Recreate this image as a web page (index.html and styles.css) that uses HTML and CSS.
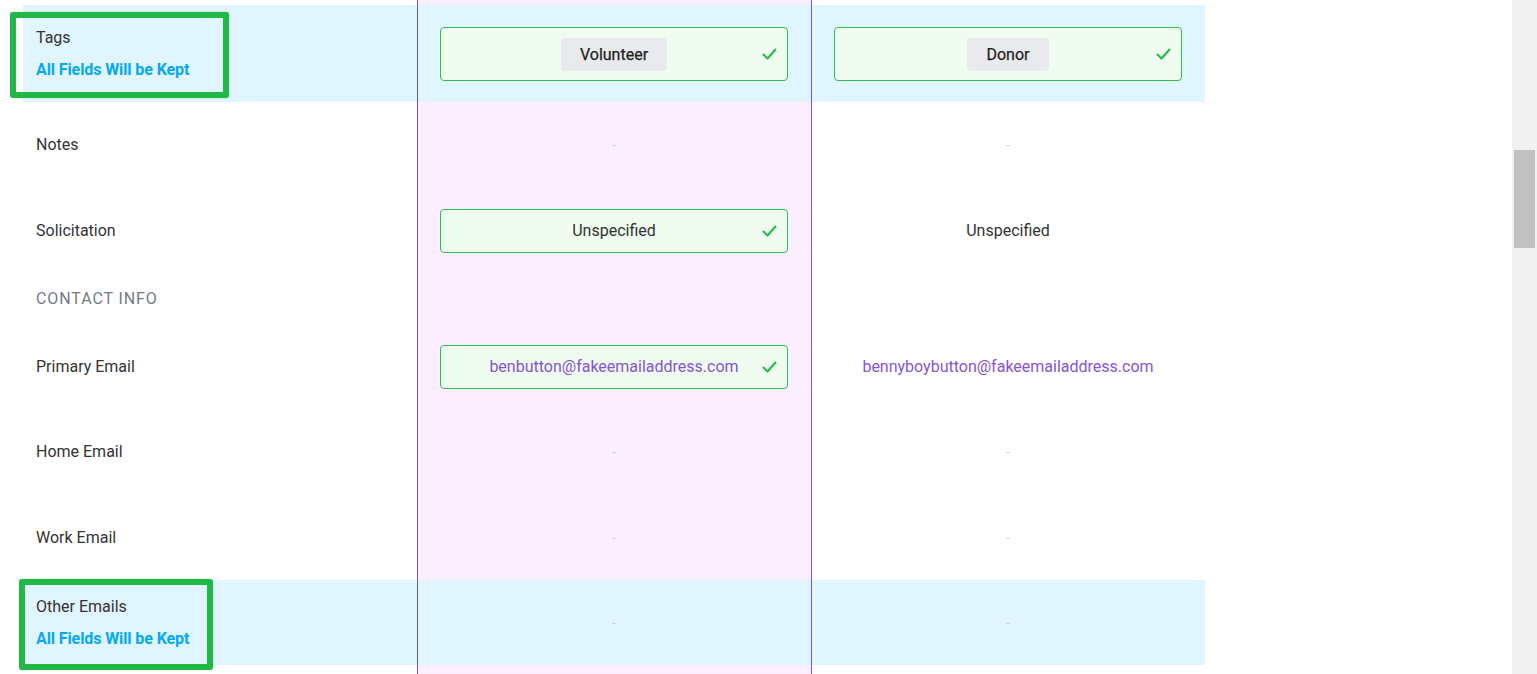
FILE: index.html
```html
<!DOCTYPE html>
<html>
<head>
<meta charset="utf-8">
<link rel="stylesheet" href="styles.css">
</head>
<body>
<div class="page">
  <div class="main">
    <div class="table">
      <div class="row spacer"><div class="cell"></div><div class="cell sel"></div><div class="cell"></div></div>

      <div class="row hl tall">
        <div class="cell label">
          <div class="name">Tags</div>
          <div class="kept">All Fields Will be Kept</div>
          <div class="mark mark-tags"></div>
        </div>
        <div class="cell sel val">
          <div class="field f54"><span></span><span class="chip">Volunteer</span><svg class="check" viewBox="0 0 15 12"><polyline points="1.5,6.5 5.5,10.5 13.5,1.5"/></svg></div>
        </div>
        <div class="cell val">
          <div class="field f54"><span></span><span class="chip">Donor</span><svg class="check" viewBox="0 0 15 12"><polyline points="1.5,6.5 5.5,10.5 13.5,1.5"/></svg></div>
        </div>
      </div>

      <div class="row">
        <div class="cell label"><div class="name">Notes</div></div>
        <div class="cell sel val"><span class="dash">-</span></div>
        <div class="cell val"><span class="dash">-</span></div>
      </div>

      <div class="row r85">
        <div class="cell label"><div class="name">Solicitation</div></div>
        <div class="cell sel val">
          <div class="field f44"><span></span><span class="txt">Unspecified</span><svg class="check" viewBox="0 0 15 12"><polyline points="1.5,6.5 5.5,10.5 13.5,1.5"/></svg></div>
        </div>
        <div class="cell val"><span class="txt">Unspecified</span></div>
      </div>

      <div class="row head">
        <div class="cell label"><div class="section">CONTACT INFO</div></div>
        <div class="cell sel"></div>
        <div class="cell"></div>
      </div>

      <div class="row r85">
        <div class="cell label"><div class="name">Primary Email</div></div>
        <div class="cell sel val">
          <div class="field f44"><span></span><span class="email">benbutton@fakeemailaddress.com</span><svg class="check" viewBox="0 0 15 12"><polyline points="1.5,6.5 5.5,10.5 13.5,1.5"/></svg></div>
        </div>
        <div class="cell val"><span class="email">bennyboybutton@fakeemailaddress.com</span></div>
      </div>

      <div class="row">
        <div class="cell label"><div class="name">Home Email</div></div>
        <div class="cell sel val"><span class="dash">-</span></div>
        <div class="cell val"><span class="dash">-</span></div>
      </div>

      <div class="row r85">
        <div class="cell label"><div class="name">Work Email</div></div>
        <div class="cell sel val"><span class="dash">-</span></div>
        <div class="cell val"><span class="dash">-</span></div>
      </div>

      <div class="row hl r85">
        <div class="cell label">
          <div class="name">Other Emails</div>
          <div class="kept">All Fields Will be Kept</div>
          <div class="mark mark-other"></div>
        </div>
        <div class="cell sel val"><span class="dash">-</span></div>
        <div class="cell val"><span class="dash">-</span></div>
      </div>

      <div class="row">
        <div class="cell label"></div>
        <div class="cell sel"></div>
        <div class="cell"></div>
      </div>
    </div>
  </div>
  <div class="scrollbar"><div class="thumb"></div></div>
</div>
</body>
</html>
```

FILE: styles.css
```css
html, body {
  margin: 0;
  padding: 0;
  height: 674px;
  overflow: hidden;
  background: #ffffff;
}

body {
  font-family: Roboto, "Liberation Sans", Arial, sans-serif;
  font-size: 16px;
  color: #333333;
}

.page {
  display: flex;
  height: 674px;
}

.main {
  flex: 1;
  overflow: hidden;
}

.scrollbar {
  width: 25px;
  background: #f1f1f1;
  display: flex;
  flex-direction: column;
  align-items: center;
}

.thumb {
  margin-top: 150px;
  width: 21px;
  height: 98px;
  background: #c1c1c1;
}

.table {
  margin-left: 23px;
  width: 1182px;
}

.row {
  display: grid;
  grid-template-columns: 394px 395px 393px;
  height: 86px;
}

.row.r85 { height: 85px; }
.row.tall { height: 97px; }
.row.spacer { height: 5px; }
.row.head { height: 51px; }

.row.hl {
  background: #e1f5fe;
}

.cell {
  box-sizing: border-box;
  min-width: 0;
}

.sel {
  background: #fbeefe;
  border-left: 1px solid #6b55c4;
  border-right: 1px solid #7d52d6;
}

.row.hl .sel {
  background: transparent;
}

.label {
  position: relative;
  padding-left: 13px;
  display: flex;
  flex-direction: column;
  justify-content: center;
}

.name {
  line-height: 20px;
  color: #333333;
}

.kept {
  margin-top: 12px;
  line-height: 20px;
  font-weight: 700;
  color: #03a9f4;
  letter-spacing: -0.1px;
}

.section {
  color: #737b86;
  letter-spacing: 0.9px;
  line-height: 20px;
}

.val {
  padding: 0 23px 0 22px;
  display: flex;
  align-items: center;
  justify-content: center;
}

.field {
  box-sizing: border-box;
  width: 100%;
  border: 1px solid #2ebd52;
  border-radius: 4px;
  background: #f0fcf0;
  display: grid;
  grid-template-columns: 1fr auto 1fr;
  align-items: center;
  padding: 0 10px;
}

.f54 { height: 54px; }
.f44 { height: 44px; }

.chip {
  display: flex;
  align-items: center;
  height: 33px;
  padding: 0 19px 0 19px;
  background: #e8eaee;
  border-radius: 4px;
  font-weight: 400;
  color: #1f1f1f;
  -webkit-text-stroke: 0.25px #1f1f1f;
  margin-top: 1px;
}

.txt {
  color: #333333;
  line-height: 20px;
}

.email {
  color: #8455d8;
  line-height: 20px;
}

.check {
  justify-self: end;
  width: 15px;
  height: 12px;
  fill: none;
  stroke: #22b94a;
  stroke-width: 2;
  stroke-linecap: round;
  stroke-linejoin: round;
}

.dash {
  color: #c6cbd3;
  font-size: 12px;
  line-height: 12px;
}

.mark {
  position: absolute;
  box-sizing: border-box;
  border: 6px solid #21b848;
  border-radius: 3px;
  box-shadow: 0 0 1px 0 rgba(60, 60, 60, 0.7);
}

.mark-tags {
  left: -13px;
  top: 7px;
  width: 219px;
  height: 86px;
}

.mark-other {
  left: -4px;
  top: -1px;
  width: 194px;
  height: 91px;
}
```
